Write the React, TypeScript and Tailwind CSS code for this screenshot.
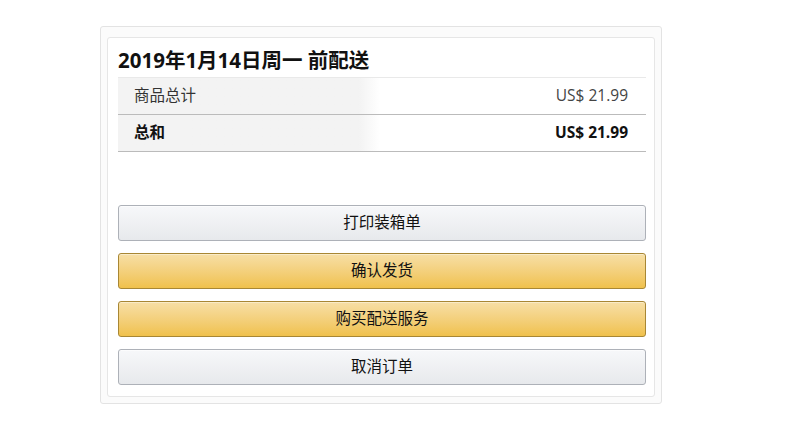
export default function App() {
  const font = { fontFamily: '"Open Sans", "Noto Sans CJK SC", sans-serif' };
  const gray =
    "h-[36px] w-full rounded-[3px] border border-[#adb1b8] bg-gradient-to-b from-[#f7f8fa] to-[#e7e9ec] text-[15.5px] text-[#111] shadow-[inset_0_1px_0_rgba(255,255,255,0.6)]";
  const gold =
    "h-[36px] w-full rounded-[3px] border border-[#a88734] bg-gradient-to-b from-[#f7dfa5] to-[#f0c14b] text-[15.5px] text-[#111] shadow-[inset_0_1px_0_rgba(255,255,255,0.4)]";

  return (
    <div className="min-h-[434px] w-[786px] bg-white pt-[26px] pl-[100px]" style={font}>
      <div className="w-[562px] rounded-[3px] border border-[#e3e3e3] bg-[#fbfbfb] p-[6px] pt-[10px]">
        <div className="rounded-[3px] border border-[#e6e6e6] bg-white pt-[7px] pr-[8px] pb-[11px] pl-[10px]">
          <h1 className="text-[20.5px] font-bold leading-[30px] text-[#111]">2019年1月14日周一 前配送</h1>
          <div className="mt-[2px] border-t border-[#e9e9e9]">
            <div className="grid h-[37px] grid-cols-[262px_1fr] border-b border-[#bbb]">
              <div className="flex items-center bg-gradient-to-r from-[#f3f3f3] from-92% to-white pl-[16px] text-[15.5px] text-[#333]">
                商品总计
              </div>
              <div className="flex items-center justify-end pr-[18px] text-[15.5px] text-[#444]">US$ 21.99</div>
            </div>
            <div className="grid h-[37px] grid-cols-[262px_1fr] border-b border-[#bbb]">
              <div className="flex items-center bg-gradient-to-r from-[#f3f3f3] from-92% to-white pl-[16px] text-[15.5px] font-bold text-[#111]">
                总和
              </div>
              <div className="flex items-center justify-end pr-[18px] text-[15.5px] font-bold text-[#111]">US$ 21.99</div>
            </div>
          </div>
          <div className="mt-[53px] flex flex-col gap-[12px]">
            <button className={gray}>打印装箱单</button>
            <button className={gold}>确认发货</button>
            <button className={gold}>购买配送服务</button>
            <button className={gray}>取消订单</button>
          </div>
        </div>
      </div>
    </div>
  );
}
